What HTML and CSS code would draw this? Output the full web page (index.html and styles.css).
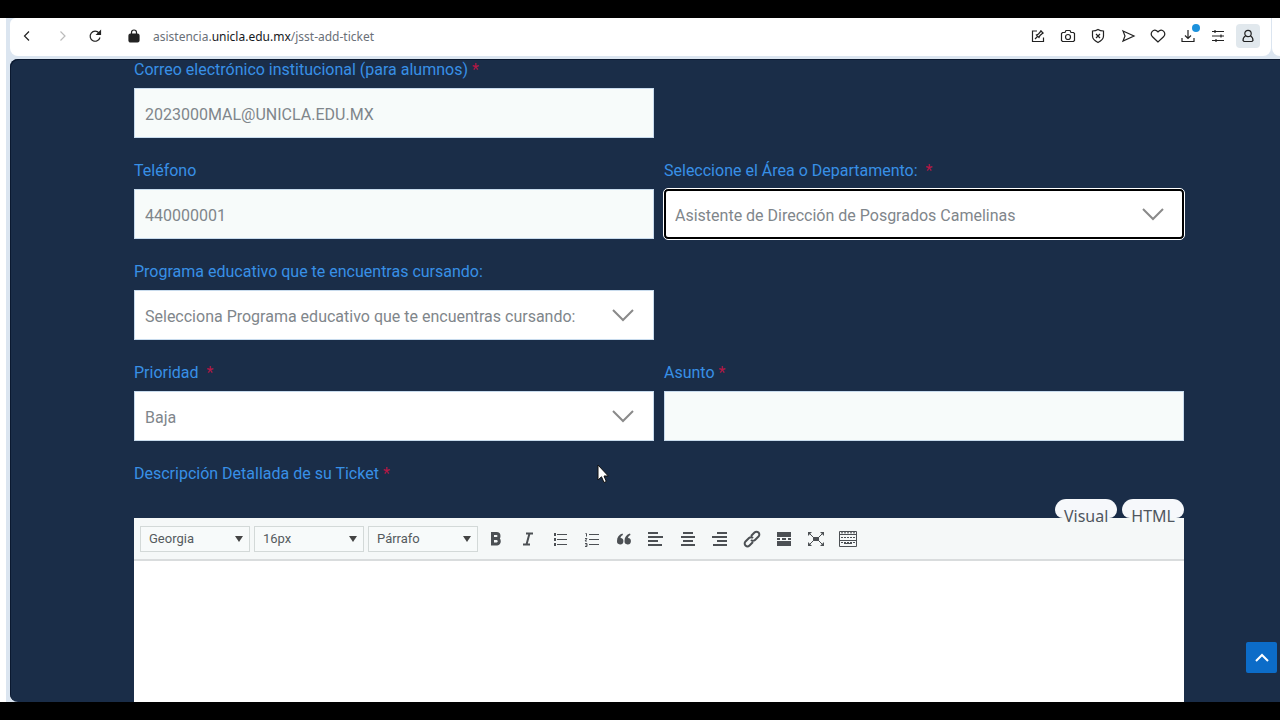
FILE: index.html
```html
<!DOCTYPE html>
<html lang="es">
<head>
<meta charset="utf-8">
<title>Agregar ticket</title>
<link rel="stylesheet" href="styles.css">
</head>
<body>
<div class="window">
  <div class="side-strip"></div>
  <div class="main">
    <header class="chrome">
      <div class="address-bar">
        <button class="nav-btn" aria-label="Atrás"><svg width="16" height="16" viewBox="0 0 16 16"><path d="M10 3.500L5.500 8l4.500 4.500"/></svg></button>
        <button class="nav-btn nav-off" aria-label="Adelante"><svg width="16" height="16" viewBox="0 0 16 16"><path d="M7.500 3.500L12 8l-4.500 4.500"/></svg></button>
        <button class="nav-btn" aria-label="Recargar"><svg width="16" height="16" viewBox="0 0 16 16"><path d="M12 5A5 5 0 1 0 13 9.500"/><path d="M13.500 3v3.500H10z" fill="#222"/></svg></button>
        <svg class="lock" width="14" height="16" viewBox="0 0 14 16"><rect x="2" y="6" width="10" height="8" rx="1.500" fill="#222"/><path d="M4.500 7V4.500a2.500 2.500 0 0 1 5 0V7"/></svg>
        <div class="url">asistencia.<span class="host">unicla.edu.mx</span>/jsst-add-ticket</div>
        <div class="actions">
          <button class="act" aria-label="Editar"><svg width="16" height="16" viewBox="0 0 16 16"><path d="M7 3H2.500v10.500h11V9.500M5 11l2.500-2.500M6.500 7l2.500 2.500 1-2 3-2.500-2-2-2.500 3zM10.500 2.500l3 3"/></svg></button>
          <button class="act" aria-label="Captura"><svg width="16" height="16" viewBox="0 0 16 16"><path d="M2.500 4.500H5l1-2h4l1 2h2.500l1 1v7l-1 1h-11l-1-1v-7z"/><circle cx="8" cy="9" r="2.500"/></svg></button>
          <button class="act" aria-label="Protección"><svg width="16" height="16" viewBox="0 0 16 16"><path d="M8 1.500c2 1.300 4 1.500 5.500 1.500v5c0 3-2.500 5-5.500 6.500C5 13 2.500 11 2.500 8V3C4 3 6 2.800 8 1.500zM6 6l4 4M10 6l-4 4"/></svg></button>
          <button class="act" aria-label="Enviar"><svg width="16" height="16" viewBox="0 0 16 16"><path d="M3 3l11 5-11 5 2-5z"/></svg></button>
          <button class="act" aria-label="Favoritos"><svg width="16" height="16" viewBox="0 0 16 16"><path d="M8 14L2.200 8.500C-.5 5 3.500.2 7 3l1 1 1-1c3.500-2.800 7.500 2 4.800 5.500z"/></svg></button>
          <button class="act" aria-label="Descargas"><svg width="16" height="16" viewBox="0 0 16 16"><path d="M8 2v8.500M5 7.500l3 3 3-3M2 10v3.500h12V10"/></svg><span class="dot"></span></button>
          <button class="act" aria-label="Ajustes"><svg width="16" height="16" viewBox="0 0 16 16"><path d="M2 3.500h12M2 8h12M2 12.500h12M5 2v3M11 6.500v3M6 11v3"/></svg></button>
          <button class="act act-user" aria-label="Perfil"><svg width="16" height="16" viewBox="0 0 16 16"><circle cx="8" cy="5.500" r="3.200"/><path d="M5.500 8C3.500 9 3 11 3 12.500l1 1h8l1-1c0-1.500-.5-3.500-2.500-4.500"/></svg></button>
        </div>
      </div>
      <div class="chrome-end"></div>
    </header>
    <main class="page">
      <form class="form">
        <div class="row">
          <div class="field">
            <label for="mail">Correo electrónico institucional (para alumnos) <span class="req">*</span></label>
            <input class="control" id="mail" type="text" value="2023000MAL@UNICLA.EDU.MX">
          </div>
        </div>
        <div class="row">
          <div class="field">
            <label for="tel">Teléfono</label>
            <input class="control" id="tel" type="text" value="440000001">
          </div>
          <div class="field">
            <label for="area">Seleccione el Área o Departamento: &nbsp;<span class="req">*</span></label>
            <div class="select-box">
              <select class="control control-focus" id="area"><option>Asistente de Dirección de Posgrados Camelinas</option></select>
              <svg class="chevron" width="22" height="14" viewBox="0 0 22 14"><path d="M1 2l10 10L21 2"/></svg>
            </div>
          </div>
        </div>
        <div class="row">
          <div class="field">
            <label for="prog">Programa educativo que te encuentras cursando:</label>
            <div class="select-box">
              <select class="control" id="prog"><option>Selecciona Programa educativo que te encuentras cursando:</option></select>
              <svg class="chevron" width="22" height="14" viewBox="0 0 22 14"><path d="M1 2l10 10L21 2"/></svg>
            </div>
          </div>
        </div>
        <div class="row">
          <div class="field">
            <label for="prio">Prioridad &nbsp;<span class="req">*</span></label>
            <div class="select-box">
              <select class="control" id="prio"><option>Baja</option></select>
              <svg class="chevron" width="22" height="14" viewBox="0 0 22 14"><path d="M1 2l10 10L21 2"/></svg>
            </div>
          </div>
          <div class="field">
            <label for="asunto">Asunto <span class="req">*</span></label>
            <input class="control" id="asunto" type="text">
          </div>
        </div>
        <div class="description">
          <label for="desc">Descripción Detallada de su Ticket <span class="req">*</span></label>
          <div class="tabs">
            <button class="tab" type="button">Visual</button>
            <button class="tab" type="button">HTML</button>
          </div>
          <div class="editor">
            <div class="toolbar">
              <div class="select-box"><select class="tool-select" aria-label="Fuente"><option>Georgia</option></select><svg class="arrow" width="8" height="7" viewBox="0 0 8 7"><path d="M0 1h8L4 7z"/></svg></div>
              <div class="select-box"><select class="tool-select" aria-label="Tamaño"><option>16px</option></select><svg class="arrow" width="8" height="7" viewBox="0 0 8 7"><path d="M0 1h8L4 7z"/></svg></div>
              <div class="select-box"><select class="tool-select" aria-label="Formato"><option>Párrafo</option></select><svg class="arrow" width="8" height="7" viewBox="0 0 8 7"><path d="M0 1h8L4 7z"/></svg></div>
              <button class="tool" type="button" aria-label="Negrita"><svg width="20" height="20" viewBox="0 0 20 20"><path d="M6.500 4.500h4a2.500 2.500 0 0 1 0 5h-4zM6.500 9.500H11a2.800 2.800 0 0 1 0 5.500H6.500z" class="bold"/></svg></button>
              <button class="tool" type="button" aria-label="Cursiva"><svg width="20" height="20" viewBox="0 0 20 20"><path d="M8 4.500h7M5 15.500h7M11.500 4.500l-3 11" class="thick"/></svg></button>
              <button class="tool" type="button" aria-label="Lista"><svg width="20" height="20" viewBox="0 0 20 20"><path d="M7 5.500h10M7 10.500h10M7 15.500h10"/><path d="M4 4h2v3H4zM4 9h2v3H4zM4 14h2v3H4z" class="fill"/></svg></button>
              <button class="tool" type="button" aria-label="Lista numerada"><svg width="20" height="20" viewBox="0 0 20 20"><path d="M7 5.500h10M7 10.500h10M7 15.500h10M3.500 4.500h1v3M3 9.500h2l-2 2.500h2M3 14.500h2v3H3M3.500 16H5"/></svg></button>
              <button class="tool" type="button" aria-label="Cita"><svg width="20" height="20" viewBox="0 0 20 20"><path d="M8.500 4.500C5 5.500 3 8 3 12a3.200 3.200 0 1 0 3.500-3c.2-1.500 1-2.500 2.500-3zM16 4.500c-3.500 1-5.500 3.500-5.500 7.500A3.200 3.200 0 1 0 14 9c.2-1.500 1-2.500 2.500-3z" class="fill"/></svg></button>
              <button class="tool" type="button" aria-label="Izquierda"><svg width="20" height="20" viewBox="0 0 20 20"><path d="M2 3h10v2H2zM2 7h15v2H2zM2 11h10v2H2zM2 15h14v2H2z" class="fill"/></svg></button>
              <button class="tool" type="button" aria-label="Centrar"><svg width="20" height="20" viewBox="0 0 20 20"><path d="M5 3h10v2H5zM3 7h14v2H3zM5 11h10v2H5zM3 15h14v2H3z" class="fill"/></svg></button>
              <button class="tool" type="button" aria-label="Derecha"><svg width="20" height="20" viewBox="0 0 20 20"><path d="M7 3h10v2H7zM2 7h15v2H2zM7 11h10v2H7zM3 15h14v2H3z" class="fill"/></svg></button>
              <button class="tool" type="button" aria-label="Enlace"><svg width="20" height="20" viewBox="0 0 20 20"><path d="M9 7l3.500-3.500a2.800 2.800 0 0 1 4 4L13 11a2.800 2.800 0 0 1-4 0M11 13l-3.500 3.500a2.800 2.800 0 0 1-4-4L7 9a2.800 2.800 0 0 1 4 0" class="thick"/></svg></button>
              <button class="tool" type="button" aria-label="Leer más"><svg width="20" height="20" viewBox="0 0 20 20"><path d="M3 3h14v5H3zM3 12h14v5H3zM3 9h3v2H3zM8 9h4v2H8zM14 9h3v2h-3z" class="fill"/></svg></button>
              <button class="tool" type="button" aria-label="Pantalla completa"><svg width="20" height="20" viewBox="0 0 20 20"><path d="M7 8h6v4H7zM2 3h4L2 7zM18 3h-4l4 4zM2 17h4l-4-4zM18 17h-4l4-4z" class="fill"/><path d="M3 4l4 4M17 4l-4 4M3 16l4-4M17 16l-4-4"/></svg></button>
              <button class="tool" type="button" aria-label="Teclado"><svg width="20" height="20" viewBox="0 0 20 20"><path d="M1.500 2.500h17v15h-17zM2 5.500h16M2 11.500h16M6 14.500h8"/><path d="M3 8.500h14M3 13.500h14M3 3.800h14" stroke-dasharray="2 1"/></svg></button>
            </div>
            <textarea class="editor-text" id="desc"></textarea>
          </div>
        </div>
      </form>
      <button class="to-top" aria-label="Subir"><svg width="16" height="16" viewBox="0 0 16 16"><path d="M2 11l6-6 6 6"/></svg></button>
      <svg class="cursor" width="12" height="20" viewBox="0 0 12 20"><path d="M1 1v15l3.500-3.200L7 18.500l2.300-1L7 12h4.300z"/></svg>
    </main>
  </div>
</div>
</body>
</html>
```
FILE: styles.css
```css
* { box-sizing: border-box; }

body {
  margin: 0;
  background: #000;
  font-family: Roboto, sans-serif;
  font-size: 16px;
}

button, select, input, textarea { font: inherit; margin: 0; }
button { border: 0; background: none; padding: 0; }
svg { fill: none; display: block; }

.window {
  display: flex;
  height: 100vh;
  padding: 18px 0;
  overflow: hidden;
}

.side-strip {
  flex: none;
  width: 10px;
  background: #dbe5f0;
  border-left: 6px solid #fff;
}

.main {
  flex: 1;
  min-width: 0;
  display: flex;
  flex-direction: column;
  background: #dbe5f0;
}

.chrome { display: flex; gap: 1px; padding-bottom: 3px; }

.address-bar {
  flex: 1;
  display: flex;
  align-items: center;
  height: 38px;
  padding: 0 11px 2px 7px;
  background: #fff;
  border-radius: 6px 0 8px 8px;
}

.chrome-end { width: 8px; background: #fff; border-radius: 0 0 0 8px; }

.nav-btn { width: 20px; margin-right: 14px; display: grid; place-items: center; }
.chrome svg { stroke: #222; stroke-width: 1.2; }
.chrome .nav-off svg { stroke: #bbb; }
.lock { margin: 0 12px 0 8px; }
.url { flex: 1; font-family: "Noto Sans", sans-serif; font-size: 12px; color: #6a7078; }
.host { color: #16191d; }

.actions { display: flex; gap: 6px; }
.act { position: relative; width: 24px; height: 24px; display: grid; place-items: center; border-radius: 4px; }
.act-user { background: #e1e8ed; }
.dot { position: absolute; top: 0; right: 0; width: 8px; height: 8px; border-radius: 50%; background: #1b91dc; }

.page {
  position: relative;
  flex: 1;
  min-height: 0;
  display: flex;
  background: #1a2d48;
  border-radius: 8px 0 0 8px;
  box-shadow: inset 1px 1px #0b1930;
}

.form { flex: 1; display: flex; flex-direction: column; gap: 22px; padding: 0 96px 0 124px; }
.row { display: grid; grid-template-columns: 1fr 1fr; gap: 10px; }
.field { display: flex; flex-direction: column; gap: 7px; min-width: 0; }
label { color: #3890e6; line-height: 22px; }
.req { color: #b51745; }

.control {
  width: 100%;
  height: 50px;
  padding: 2px 10px 0;
  border: 1px solid #c8dbed;
  border-radius: 0;
  background: #f7fbfa;
  color: #7f868b;
}

.select-box { display: grid; align-items: center; }
.select-box > * { grid-area: 1 / 1; }
select { appearance: none; }
select.control { background: #fff; }
select.control-focus { outline: 1px solid #fff; border: 2px solid #000; border-radius: 4px; padding-left: 9px; }
.chevron { justify-self: end; margin-right: 20px; stroke: #8a8a8a; stroke-width: 2; pointer-events: none; }

.description { flex: 1; min-height: 0; display: flex; flex-direction: column; }
.tabs { display: flex; justify-content: flex-end; gap: 5px; margin-top: 14px; }
.tab {
  position: relative;
  z-index: 1;
  height: 19px;
  padding: 0 9px;
  display: flex;
  align-items: flex-start;
  font-family: "Noto Sans", sans-serif;
  line-height: 34px;
  color: #50565e;
  background: #f6f8fb;
  border-radius: 14px 14px 10px 10px;
}

.editor { flex: 1; min-height: 0; display: flex; flex-direction: column; background: #fff; }
.toolbar { display: flex; align-items: center; gap: 4px; height: 43px; padding: 0 6px; background: #f5f8f8; border-bottom: 2px solid #d9dcdd; }
.tool-select { width: 110px; height: 26px; padding: 0 8px; border: 1px solid #d3d9d8; border-radius: 0; background: #f7fafa; color: #555a5e; font-size: 13px; }
.arrow { justify-self: end; margin-right: 7px; fill: #444; pointer-events: none; }
.tool { width: 28px; height: 28px; display: grid; place-items: center; }
.tool svg { stroke: #4c5054; }
.tool .thick { stroke-width: 2; }
.tool .bold { stroke-width: 3; }
.tool .fill { fill: #4c5054; stroke: none; }
.editor-text { flex: 1; border: 0; resize: none; background: #fff; }

.to-top {
  position: absolute;
  right: 3px;
  bottom: 29px;
  width: 31px;
  height: 31px;
  display: grid;
  place-items: center;
  background: #0c6cc8;
  border-radius: 2px;
}
.to-top svg { stroke: #fff; stroke-width: 2; }

.cursor { position: absolute; left: 587px; top: 405px; fill: #fff; stroke: #111; pointer-events: none; }
```
